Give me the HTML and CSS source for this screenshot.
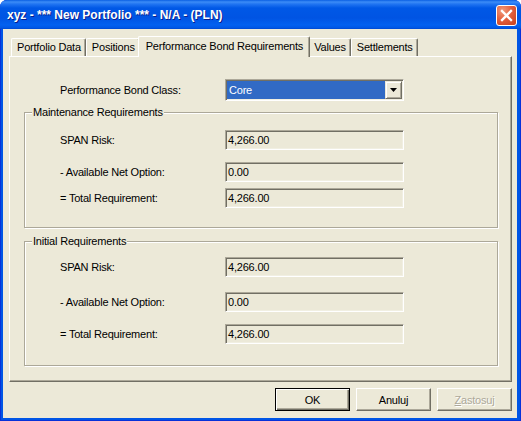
FILE: index.html
```html
<!DOCTYPE html>
<html lang="en">

<head>
    <meta charset="UTF-8">
    <meta name="viewport" content="width=device-width, initial-scale=1.0">
    <title>xyz - *** New Portfolio *** - N/A - (PLN)</title>
    <link rel="stylesheet" href="styles.css">
</head>

<body>
    <div class="window">
        <div class="titlebar">
            <span class="title">xyz - *** New Portfolio *** - N/A - (PLN)</span>
            <button class="close-btn" title="Close">
                <svg width="19" height="19" viewBox="0 0 19 19">
                    <path d="M5 5 L14 14 M14 5 L5 14" stroke="#fff" stroke-width="2.3" stroke-linecap="square" />
                </svg>
            </button>
        </div>

        <div class="client">
            <div class="tabs">
                <div class="tab">Portfolio Data</div>
                <div class="tab">Positions</div>
                <div class="tab tab-active">Performance Bond Requirements</div>
                <div class="tab">Values</div>
                <div class="tab">Settlements</div>
            </div>

            <div class="panel">
                <div class="row class-row">
                    <span class="row-label">Performance Bond Class:</span>
                    <div class="combo">
                        <span class="combo-value">Core</span>
                        <span class="combo-arrow">
                            <svg width="7" height="4" viewBox="0 0 7 4"><polygon points="0,0 7,0 3.5,4" fill="#000" /></svg>
                        </span>
                    </div>
                </div>

                <fieldset class="group group-maint">
                    <legend>Maintenance Requirements</legend>
                    <div class="row">
                        <span class="row-label">SPAN Risk:</span>
                        <div class="field">4,266.00</div>
                    </div>
                    <div class="row">
                        <span class="row-label">- Available Net Option:</span>
                        <div class="field">0.00</div>
                    </div>
                    <div class="row">
                        <span class="row-label">= Total Requirement:</span>
                        <div class="field">4,266.00</div>
                    </div>
                </fieldset>

                <fieldset class="group group-init">
                    <legend>Initial Requirements</legend>
                    <div class="row">
                        <span class="row-label">SPAN Risk:</span>
                        <div class="field">4,266.00</div>
                    </div>
                    <div class="row">
                        <span class="row-label">- Available Net Option:</span>
                        <div class="field">0.00</div>
                    </div>
                    <div class="row">
                        <span class="row-label">= Total Requirement:</span>
                        <div class="field">4,266.00</div>
                    </div>
                </fieldset>
            </div>

            <div class="buttons">
                <button class="btn btn-default">OK</button>
                <button class="btn">Anuluj</button>
                <button class="btn" disabled><u>Z</u>astosuj</button>
            </div>
        </div>
    </div>
</body>

</html>
```

FILE: styles.css
```css
*,
*::before,
*::after {
    box-sizing: border-box;
}

html,
body {
    margin: 0;
    padding: 0;
    background: #fff;
}

body {
    width: 521px;
    height: 421px;
    overflow: hidden;
    font-family: "Liberation Sans", Arial, sans-serif;
    font-size: 11px;
    letter-spacing: -0.2px;
    color: #000;
}

.window {
    display: flex;
    flex-direction: column;
    height: 421px;
    background: #0055e5;
    border-radius: 7px 7px 0 0;
    overflow: hidden;
    box-shadow: inset 0 0 0 1px #0831d9;
}

/* title bar */
.titlebar {
    flex: none;
    height: 29px;
    display: flex;
    align-items: flex-start;
    justify-content: space-between;
    padding: 0 4px 0 7px;
    background: linear-gradient(to bottom, #0a5fe3 0px, #3c8cf7 2px, #2175f2 4px, #0058e6 8px, #0054e3 18px, #0361f0 25px, #0056e4 28px, #0045cc 29px);
}

.title {
    padding-top: 8px;
    font-size: 12px;
    line-height: 15px;
    font-weight: bold;
    letter-spacing: 0;
    color: #fff;
    text-shadow: 1px 1px 0 #0a1e8c;
    white-space: nowrap;
}

.close-btn {
    margin-top: 5px;
    width: 21px;
    height: 21px;
    padding: 0;
    border: 1px solid #fff;
    border-radius: 3px;
    background: radial-gradient(circle at 30% 25%, #f09b7c 0%, #e4603e 45%, #c63f1c 100%);
    display: flex;
    align-items: center;
    justify-content: center;
    cursor: pointer;
}

/* client area */
.client {
    flex: 1;
    margin: 0 4px 3px 3px;
    padding: 7px 5px 0 6px;
    background: #ece9d8;
}

.tabs {
    display: flex;
    align-items: flex-end;
    height: 20px;
    padding-left: 2px;
}

.tab {
    height: 18px;
    padding: 0 4px 0 5px;
    line-height: 17px;
    white-space: nowrap;
    background: #ece9d8;
    border-top: 1px solid #fff;
    border-left: 1px solid #fff;
    border-right: 1px solid #716f64;
    border-radius: 2px 2px 0 0;
    box-shadow: inset -1px 0 0 #aca899;
}

.tab-active {
    position: relative;
    z-index: 1;
    height: 21px;
    margin: 0 -2px -1px;
    padding: 0 6px 0 7px;
    line-height: 18px;
}

.panel {
    border: 1px solid;
    border-color: #fff #716f64 #716f64 #fff;
    box-shadow: inset -1px -1px 0 #aca899;
    padding-bottom: 15px;
}

.row {
    display: flex;
    align-items: center;
}

.row-label {
    flex: none;
    width: 165px;
    white-space: nowrap;
}

.class-row {
    margin-top: 22px;
    padding-left: 50px;
}

.combo {
    display: flex;
    width: 179px;
    height: 22px;
    padding-left: 1px;
    background: #fff;
    border: 1px solid;
    border-color: #aca899 #fff #fff #aca899;
    box-shadow: inset 1px 1px 0 #716f64, inset -1px -1px 0 #f1efe2;
}

.combo-value {
    flex: 1;
    margin: 1px 0;
    padding-left: 2px;
    line-height: 18px;
    color: #fff;
    background: #316ac5;
}

.combo-arrow {
    flex: none;
    width: 17px;
    margin: 1px 1px 1px 0;
    display: flex;
    align-items: center;
    justify-content: center;
    background: #ece9d8;
    border: 1px solid;
    border-color: #ece9d8 #716f64 #716f64 #ece9d8;
    box-shadow: inset 1px 1px 0 #fff, inset -1px -1px 0 #aca899;
}

.combo-arrow svg {
    display: block;
}

/* group boxes */
.group {
    margin: 4px 13px 0 14px;
    padding: 0 0 19px 7px;
    border: 1px solid #aca899;
    box-shadow: 1px 1px 0 #fff, inset 1px 1px 0 #fff;
    min-width: 0;
}

.group legend {
    padding: 0 1px;
    line-height: 15px;
    background: #ece9d8;
}

.group .row {
    padding-left: 28px;
}

.group-maint .row:nth-of-type(1) {
    margin-top: 10px;
}

.group-maint .row:nth-of-type(2) {
    margin-top: 12px;
}

.group-maint .row:nth-of-type(3) {
    margin-top: 6px;
}

.group-init {
    margin-top: 6px;
    padding-bottom: 21px;
}

.group-init .row:nth-of-type(1) {
    margin-top: 8px;
}

.group-init .row:nth-of-type(2) {
    margin-top: 15px;
}

.group-init .row:nth-of-type(3) {
    margin-top: 12px;
}

.field {
    width: 179px;
    height: 20px;
    padding: 0 2px;
    line-height: 18px;
    white-space: nowrap;
    background: #ece9d8;
    border: 1px solid;
    border-color: #aca899 #fff #fff #aca899;
    box-shadow: inset 1px 1px 0 #716f64, inset -1px -1px 0 #f1efe2;
}

/* dialog buttons */
.buttons {
    display: flex;
    justify-content: flex-end;
    gap: 6px;
    margin-top: 6px;
}

.btn {
    width: 75px;
    height: 23px;
    padding: 0;
    font-family: inherit;
    font-size: 11px;
    letter-spacing: -0.2px;
    color: #000;
    background: #ece9d8;
    border: 1px solid;
    border-color: #fff #716f64 #716f64 #fff;
    box-shadow: inset -1px -1px 0 #aca899;
    cursor: pointer;
}

.btn-default {
    border-color: #000;
    box-shadow: inset 1px 1px 0 #fff, inset -1px -1px 0 #716f64, inset -2px -2px 0 #aca899;
}

.btn:disabled {
    color: #aca899;
    text-shadow: 1px 1px 0 #fff;
    cursor: default;
}
```
